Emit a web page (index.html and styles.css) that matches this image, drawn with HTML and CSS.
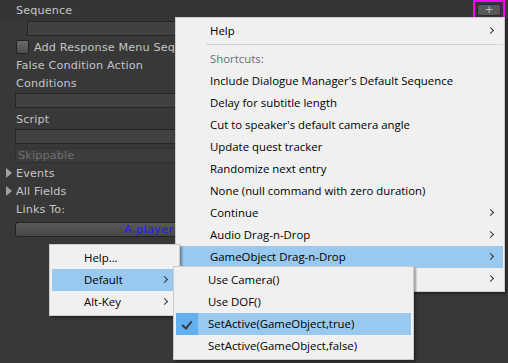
FILE: index.html
```html
<!DOCTYPE html>
<html lang="en">
<head>
    <meta charset="UTF-8">
    <title>Sequence Menu</title>
    <link rel="stylesheet" href="styles.css">
</head>
<body>
    <div class="inspector">
        <div class="header-row">
            <span class="label">Sequence</span>
            <span class="plus-wrap"><button class="plus-btn">+</button></span>
        </div>
        <div class="field field-indent"></div>
        <div class="row check-row">
            <span class="checkbox"></span>
            <span class="label">Add Response Menu Sequence</span>
        </div>
        <div class="row"><span class="label">False Condition Action</span></div>
        <div class="row"><span class="label">Conditions</span></div>
        <div class="field"></div>
        <div class="row script-row"><span class="label">Script</span></div>
        <div class="field"></div>
        <div class="field field-disabled">Skippable</div>
        <div class="row foldout first-fold"><span class="tri"></span><span class="label">Events</span></div>
        <div class="row foldout"><span class="tri"></span><span class="label">All Fields</span></div>
        <div class="row"><span class="label">Links To:</span></div>
        <div class="link-btn">A player response</div>
    </div>

    <!-- main context menu -->
    <div class="menu menu-main">
        <div class="item has-sub">Help</div>
        <div class="separator"></div>
        <div class="item disabled">Shortcuts:</div>
        <div class="item">Include Dialogue Manager's Default Sequence</div>
        <div class="item">Delay for subtitle length</div>
        <div class="item">Cut to speaker's default camera angle</div>
        <div class="item">Update quest tracker</div>
        <div class="item">Randomize next entry</div>
        <div class="item">None (null command with zero duration)</div>
        <div class="item has-sub">Continue</div>
        <div class="item has-sub">Audio Drag-n-Drop</div>
        <div class="item has-sub active">GameObject Drag-n-Drop</div>
        <div class="item has-sub">Other</div>
    </div>

    <!-- left popup -->
    <div class="menu menu-left">
        <div class="item">Help...</div>
        <div class="item has-sub active">Default</div>
        <div class="item has-sub">Alt-Key</div>
    </div>

    <!-- submenu -->
    <div class="menu menu-sub">
        <div class="item">Use Camera()</div>
        <div class="item">Use DOF()</div>
        <div class="item active checked">SetActive(GameObject,true)</div>
        <div class="item">SetActive(GameObject,false)</div>
    </div>
</body>
</html>
```

FILE: styles.css
```css
body {
    margin: 0;
    background: #383838;
    width: 508px;
    height: 363px;
    overflow: hidden;
    position: relative;
    font-family: 'DejaVu Sans', sans-serif;
}
.inspector {
    display: flex;
    flex-direction: column;
    padding: 0 0 0 16px;
    color: #c4c4c4;
    font-size: 11.2px;
    letter-spacing: 0.15px;
}
.header-row {
    height: 21px;
    display: flex;
    justify-content: space-between;
    align-items: center;
    margin-left: -16px;
    padding-left: 16px;
    background: #353535;
}
.plus-wrap {
    border: 2px solid #ff00ff;
    width: 32px;
    height: 19px;
    margin-right: 3px;
    display: flex;
    align-items: center;
    justify-content: center;
    box-sizing: border-box;
    align-self: flex-start;
}
.plus-btn {
    width: 24px;
    height: 12px;
    padding: 0;
    border: 1px solid #2a2a2a;
    border-radius: 3px;
    background: #585858;
    color: #bdbdbd;
    font-size: 11px;
    line-height: 9px;
    font-family: 'DejaVu Sans', sans-serif;
}
.row {
    height: 18px;
    flex: none;
    display: flex;
    align-items: center;
}
.field {
    flex: none;
    height: 15px;
    margin: 1px 0 0 -1px;
    width: 460px;
    background: #414141;
    border: 1px solid #262626;
    box-sizing: border-box;
}
.field-indent {
    margin: 0 0 0 11px;
}
.script-row {
    margin-top: 2px;
}
.field-disabled {
    margin-top: 4px;
    color: #6f6f6f;
    padding-left: 2px;
    line-height: 13px;
    background: #3c3c3c;
    border-color: #303030;
}
.check-row {
    margin-top: 2px;
    gap: 5px;
}
.checkbox {
    width: 11px;
    height: 12px;
    border: 1px solid #222;
    border-radius: 2px;
    background: linear-gradient(#6a6a6a, #4e4e4e);
}
.foldout {
    margin-left: -10px;
    gap: 4px;
}
.first-fold {
    margin-top: 1px;
}
.tri {
    width: 0;
    height: 0;
    border-top: 5px solid transparent;
    border-bottom: 5px solid transparent;
    border-left: 6px solid #a0a0a0;
}
.link-btn {
    flex: none;
    height: 15px;
    margin: 4px 0 0 -1px;
    width: 460px;
    box-sizing: border-box;
    border: 1px solid #232323;
    border-radius: 3px;
    background: linear-gradient(#5a5a5a, #464646);
    color: #1c1cff;
    padding-left: 108px;
    line-height: 13px;
    letter-spacing: 0.4px;
}

/* popup menus */
.menu {
    position: absolute;
    background: #f0f0f0;
    border: 1px solid #cccccc;
    box-shadow: 2px 2px 2px rgba(0, 0, 0, 0.35);
    font-family: 'Open Sans', sans-serif;
    font-size: 11.4px;
    color: #000;
    padding: 2px 1px 1px 2px;
}
.menu-main {
    left: 175px;
    top: 17px;
    width: 325px;
}
.menu-left {
    left: 49px;
    top: 244px;
    width: 125px;
    padding: 2px;
}
.menu-sub {
    left: 173px;
    top: 266px;
    width: 235px;
    padding: 2px;
}
.item {
    height: 22px;
    line-height: 22px;
    padding-left: 32px;
    position: relative;
    white-space: nowrap;
}
.item.has-sub::after {
    content: '';
    position: absolute;
    right: 10px;
    top: 8px;
    width: 4px;
    height: 4px;
    border-right: 1px solid #333;
    border-top: 1px solid #333;
    transform: rotate(45deg);
}
.item.disabled {
    color: #6d6d6d;
}
.item.active {
    background: #99c9ef;
}
.item.checked {
    background: linear-gradient(to right, #62b0f0 22px, #99c9ef 22px);
}
.item.checked::before {
    content: '';
    position: absolute;
    left: 8px;
    top: 6px;
    width: 4px;
    height: 8px;
    border-right: 2px solid #3c3c3c;
    border-bottom: 2px solid #3c3c3c;
    transform: rotate(40deg);
}
.separator {
    height: 6px;
    margin-left: 28px;
    position: relative;
}
.separator::after {
    content: '';
    position: absolute;
    left: 0;
    right: 0;
    top: 2px;
    height: 1px;
    background: #d5d5d5;
}
```
